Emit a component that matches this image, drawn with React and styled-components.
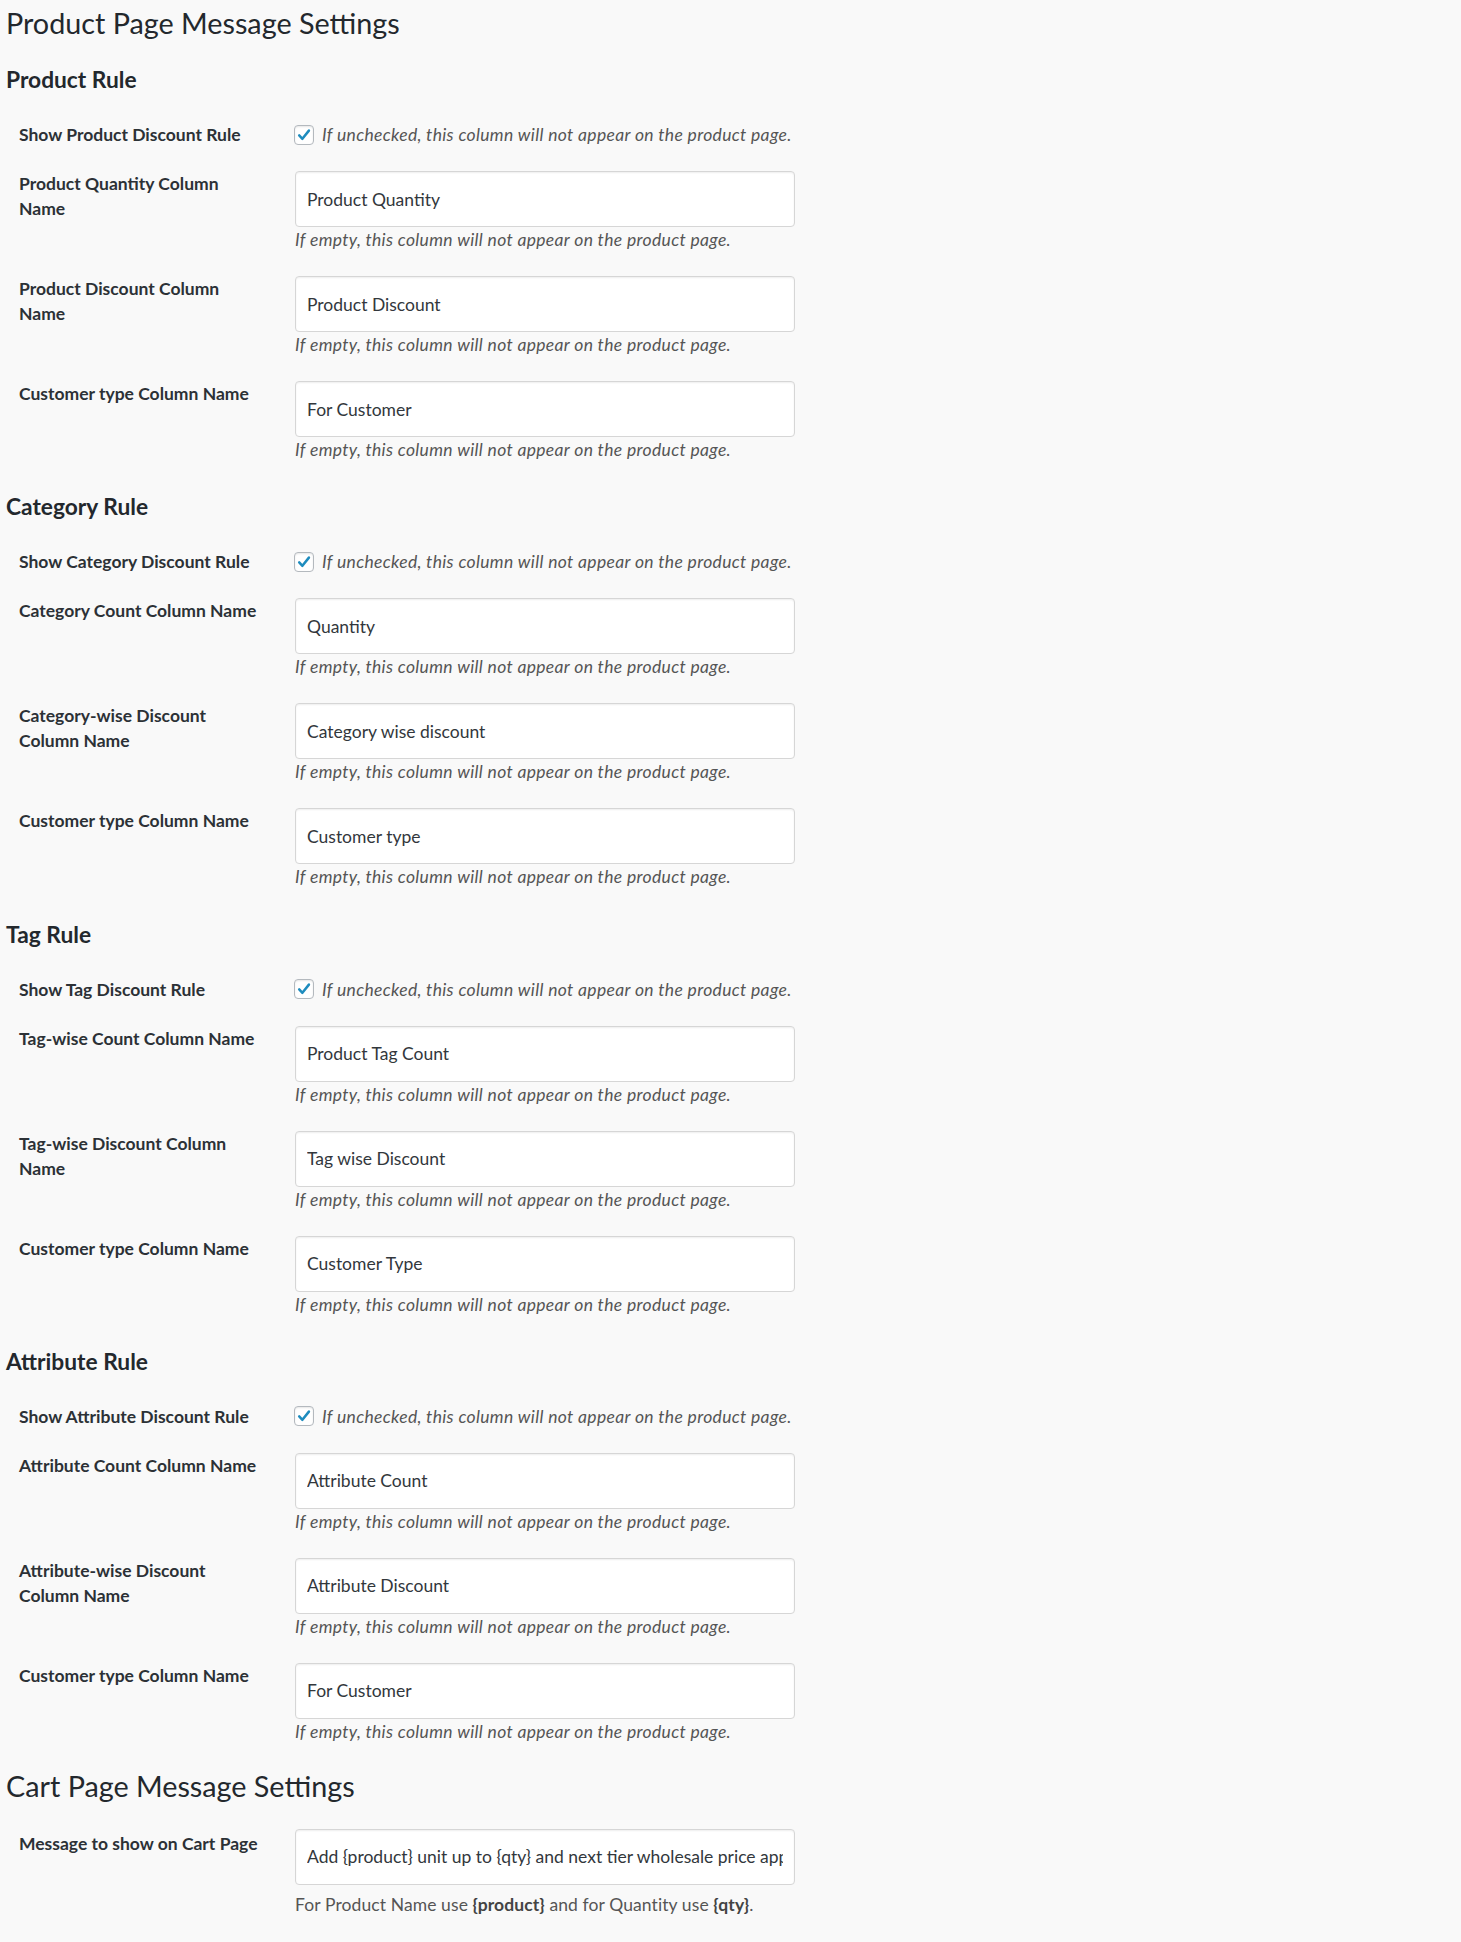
import React from "react";
import styled, { createGlobalStyle } from "styled-components";

const GlobalStyle = createGlobalStyle`
  html, body {
    margin: 0;
    padding: 0;
    background: #f9f9f9;
  }
  body {
    font-family: Lato, "Liberation Sans", sans-serif;
    color: #23282d;
  }
  * { box-sizing: border-box; }
`;

const Page = styled.div`
  padding: 5px 0 60px 6px;
  display: flex;
  flex-direction: column;
`;

const PageTitle = styled.h2`
  margin: ${(p) => (p.$spaced ? "24px" : "0")} 0 0;
  font-size: 28.75px;
  font-weight: 400;
  line-height: 36px;
  color: #23282d;
`;

const Section = styled.section`
  display: flex;
  flex-direction: column;
  margin-top: ${(p) => (p.$first ? "24px" : "30.25px")};
`;

const SectionTitle = styled.h3`
  margin: 0 0 27px;
  font-size: 22.75px;
  font-weight: 700;
  line-height: 30px;
  color: #23282d;
`;

const Rows = styled.div`
  display: flex;
  flex-direction: column;
  gap: 24px;
  padding-left: 13px;
  margin-top: ${(p) => p.$top || "0"};
`;

const Row = styled.div`
  display: grid;
  grid-template-columns: 250px 500px;
  column-gap: 26px;
  align-items: start;
`;

const Label = styled.label`
  font-size: 17.5px;
  font-weight: 700;
  line-height: 25px;
  color: #2c3136;
  padding-right: 7px;
  padding-top: ${(p) => p.$offset || "0"};
`;

const Field = styled.div`
  display: flex;
  flex-direction: column;
`;

const CheckLine = styled.div`
  display: flex;
  align-items: center;
  gap: 8px;
  height: 25px;
  margin-left: -1px;
`;

const Box = styled.span`
  width: 20px;
  height: 20px;
  flex: none;
  border: 1px solid #b4b9be;
  border-radius: 4px;
  background: #fff;
  box-shadow: inset 0 1px 2px rgba(0, 0, 0, 0.1);
  display: flex;
  align-items: center;
  justify-content: center;
`;

const Input = styled.input`
  width: 500px;
  height: 56px;
  margin: 0;
  padding: 0 11px;
  border: 1px solid #d6d6d6;
  border-radius: 4px;
  background: #fff;
  box-shadow: inset 0 1px 2px rgba(0, 0, 0, 0.07);
  font-family: Lato, "Liberation Sans", sans-serif;
  font-size: 17.5px;
  color: #32373c;
  outline: none;
`;

const Hint = styled.p`
  margin: ${(p) => (p.$plain ? "7px" : "0")} 0 0;
  font-size: 17.5px;
  line-height: 25px;
  font-style: ${(p) => (p.$plain ? "normal" : "italic")};
  letter-spacing: ${(p) => (p.$plain ? "0.1px" : "0.34px")};
  color: #555;
  white-space: nowrap;

  b {
    font-weight: 700;
    color: #444;
  }
`;

const Check = () => (
  <Box>
    <svg width="16" height="16" viewBox="0 0 16 16" aria-hidden="true">
      <path
        d="M3.2 8.4 L6.4 11.8 L12.9 3.6"
        fill="none"
        stroke="#1e8cbe"
        strokeWidth="2.5"
        strokeLinecap="round"
        strokeLinejoin="round"
      />
    </svg>
  </Box>
);

const EMPTY_HINT = "If empty, this column will not appear on the product page.";
const UNCHECKED_HINT = "If unchecked, this column will not appear on the product page.";

const sections = [
  {
    title: "Product Rule",
    show: "Show Product Discount Rule",
    fields: [
      { label: "Product Quantity Column Name", value: "Product Quantity" },
      { label: "Product Discount Column Name", value: "Product Discount" },
      { label: "Customer type Column Name", value: "For Customer" },
    ],
  },
  {
    title: "Category Rule",
    show: "Show Category Discount Rule",
    fields: [
      { label: "Category Count Column Name", value: "Quantity" },
      { label: "Category-wise Discount Column Name", value: "Category wise discount" },
      { label: "Customer type Column Name", value: "Customer type" },
    ],
  },
  {
    title: "Tag Rule",
    show: "Show Tag Discount Rule",
    fields: [
      { label: "Tag-wise Count Column Name", value: "Product Tag Count" },
      { label: "Tag-wise Discount Column Name", value: "Tag wise Discount" },
      { label: "Customer type Column Name", value: "Customer Type" },
    ],
  },
  {
    title: "Attribute Rule",
    show: "Show Attribute Discount Rule",
    fields: [
      { label: "Attribute Count Column Name", value: "Attribute Count" },
      { label: "Attribute-wise Discount Column Name", value: "Attribute Discount" },
      { label: "Customer type Column Name", value: "For Customer" },
    ],
  },
];

export default function App() {
  return (
    <>
      <GlobalStyle />
      <Page>
        <PageTitle>Product Page Message Settings</PageTitle>
        {sections.map((s, i) => (
          <Section key={s.title} $first={i === 0}>
            <SectionTitle>{s.title}</SectionTitle>
            <Rows>
              <Row>
                <Label>{s.show}</Label>
                <CheckLine>
                  <Check />
                  <Hint>{UNCHECKED_HINT}</Hint>
                </CheckLine>
              </Row>
              {s.fields.map((f) => (
                <Row key={f.label + f.value}>
                  <Label>{f.label}</Label>
                  <Field>
                    <Input defaultValue={f.value} readOnly />
                    <Hint>{EMPTY_HINT}</Hint>
                  </Field>
                </Row>
              ))}
            </Rows>
          </Section>
        ))}
        <PageTitle $spaced>Cart Page Message Settings</PageTitle>
        <Rows $top="25px">
          <Row>
            <Label $offset="2px">Message to show on Cart Page</Label>
            <Field>
              <Input
                defaultValue="Add {product} unit up to {qty} and next tier wholesale price apply."
                readOnly
              />
              <Hint $plain>
                For Product Name use <b>{"{product}"}</b> and for Quantity use <b>{"{qty}"}</b>.
              </Hint>
            </Field>
          </Row>
        </Rows>
      </Page>
    </>
  );
}
